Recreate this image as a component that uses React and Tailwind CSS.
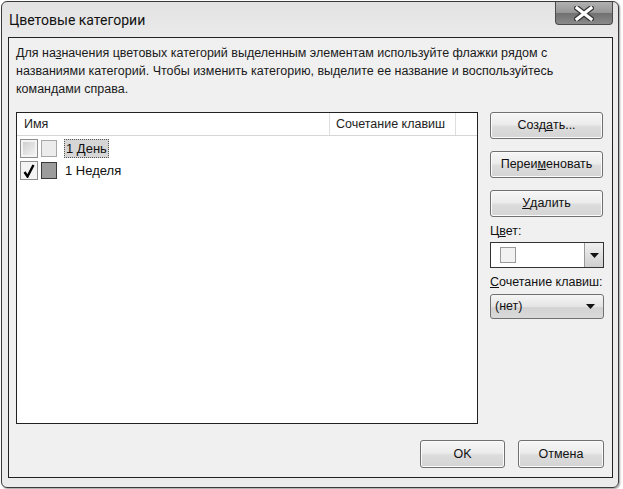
import React from 'react'

const FONT = { fontFamily: '"Liberation Sans", Arial, sans-serif' }

function Btn({ children, className = '' }) {
  return (
    <button
      className={`flex items-center justify-center whitespace-nowrap rounded-[3px] border border-[#707070] bg-[linear-gradient(#f6f6f6_0%,#ececec_45%,#dcdcdc_55%,#d4d4d4_100%)] text-[12.5px] text-[#111] shadow-[inset_0_0_0_1px_#fbfbfb] ${className}`}
    >
      {children}
    </button>
  )
}

function Arrow() {
  return (
    <svg width="9" height="5" viewBox="0 0 9 5">
      <path d="M0 0h9L4.5 5z" fill="#111" />
    </svg>
  )
}

export default function App() {
  return (
    <div className="h-[489px] w-[623px] overflow-hidden bg-white pl-px pt-px" style={FONT}>
      <div className="flex h-[487px] w-[618px] flex-col rounded-[6px] border border-[#3a3a3a] bg-[linear-gradient(#e2e2e2,#ececec_40px,#ebebeb)] px-[6px] shadow-[1px_1px_2px_#9a9a9a]">
        {/* title bar */}
        <div className="flex h-[35px] items-start justify-between">
          <span className="mt-[9px] pl-px text-[14px] leading-[18px] text-[#111]" style={{ fontFamily: 'Roboto, "Liberation Sans", sans-serif' }}>Цветовые категории</span>
          <div className="-mr-[1px] flex h-[23px] w-[58px] items-center justify-center rounded-b-[4px] border border-t-0 border-[#4a4a4a] bg-[linear-gradient(#b0b0b0,#969696_50%,#707070_51%,#8a8a8a)]">
            <svg width="20" height="15" viewBox="0 0 20 15">
              <path d="M3 2 L17 13 M17 2 L3 13" stroke="#333" strokeWidth="5.6" strokeLinecap="square" />
              <path d="M3 2 L17 13 M17 2 L3 13" stroke="#fff" strokeWidth="3.2" strokeLinecap="square" />
            </svg>
          </div>
        </div>

        {/* client area */}
        <div className="flex h-[441px] w-[605px] flex-col border border-[#222] bg-[#f0f0f0] pl-[7px] pr-[7px] pt-[6px]">
          <p className="whitespace-nowrap text-[12.5px] leading-[18px] text-[#1a1a1a]">
            Для на<u>з</u>начения цветовых категорий выделенным элементам используйте флажки рядом с
            <br />
            названиями категорий. Чтобы изменить категорию, выделите ее название и воспользуйтесь
            <br />
            командами справа.
          </p>

          <div className="mt-[14px] flex gap-[12px]">
            {/* list */}
            <div className="h-[312px] w-[462px] border border-[#222] bg-white">
              <div className="flex h-[23px] border-b border-[#d6d6d6] text-[12.5px] text-[#222]">
                <div className="flex w-[313px] items-center border-r border-[#dedede] pl-[7px]">Имя</div>
                <div className="flex w-[126px] items-center whitespace-nowrap border-r border-[#dedede] pl-[6px]">Сочетание клавиш</div>
              </div>
              <div className="flex flex-col gap-[3px] pl-[3px] pt-[3px] text-[13px] text-[#111]">
                <div className="flex h-[19px] items-center gap-[3px]">
                  <div className="flex h-[19px] w-[18px] items-center justify-center border border-[#8e8e8e] bg-[#f4f4f4]">
                    <div className="h-[13px] w-[12px] bg-[linear-gradient(135deg,#cfcfcf,#f2f2f2)]" />
                  </div>
                  <div className="h-[17px] w-[16px] border border-[#a8a8a8] bg-[#ececec]" />
                  <span className="ml-[4px] border border-dotted border-[#555] bg-[#d6d6d6] px-[1px] leading-[17px]">1 День</span>
                </div>
                <div className="flex h-[19px] items-center gap-[3px]">
                  <div className="flex h-[19px] w-[18px] items-center justify-center border border-[#8e8e8e] bg-[#f4f4f4]">
                    <svg width="12" height="14" viewBox="0 0 12 14">
                      <path d="M1.5 8 L4.5 12.5 L10.5 1" stroke="#000" strokeWidth="2.4" fill="none" />
                    </svg>
                  </div>
                  <div className="h-[17px] w-[16px] border border-[#3a3a3a] bg-[#9c9c9c]" />
                  <span className="ml-[5px] leading-[17px]">1 Неделя</span>
                </div>
              </div>
            </div>

            {/* right column */}
            <div className="flex w-[114px] flex-col">
              <Btn className="h-[27px] w-[113px]">Созд<u>а</u>ть...</Btn>
              <Btn className="mt-[12px] h-[27px] w-[113px]">Переи<u>м</u>еновать</Btn>
              <Btn className="mt-[12px] h-[27px] w-[113px]"><u>У</u>далить</Btn>
              <span className="mt-[5px] text-[12.5px] leading-[18px] text-[#111]">Ц<u>в</u>ет:</span>
              <div className="mt-[2px] flex h-[26px] w-[114px] border border-[#333] bg-white">
                <div className="flex flex-1 items-center pl-[9px]">
                  <div className="h-[16px] w-[16px] border border-[#9a9a9a] bg-[#f2f2f2]" />
                </div>
                <div className="flex w-[19px] items-center justify-center border-l border-[#999] bg-[linear-gradient(#f0f0f0,#cfcfcf)]">
                  <Arrow />
                </div>
              </div>
              <span className="mt-[5px] whitespace-nowrap text-[12.5px] leading-[18px] text-[#111]"><u>С</u>очетание клавиш:</span>
              <div className="mt-[3px] flex h-[25px] w-[114px] items-center justify-between rounded-[3px] border border-[#707070] bg-[linear-gradient(#f6f6f6,#e4e4e4_50%,#d2d2d2_55%,#dadada)] pl-[4px] pr-[8px] text-[12.5px] text-[#111]">
                <span>(нет)</span>
                <Arrow />
              </div>
            </div>
          </div>

          {/* bottom buttons */}
          <div className="mt-[16px] flex justify-end gap-[13px] pr-[1px]">
            <Btn className="h-[28px] w-[85px]">OK</Btn>
            <Btn className="h-[28px] w-[86px]">Отмена</Btn>
          </div>
        </div>
      </div>
    </div>
  )
}
